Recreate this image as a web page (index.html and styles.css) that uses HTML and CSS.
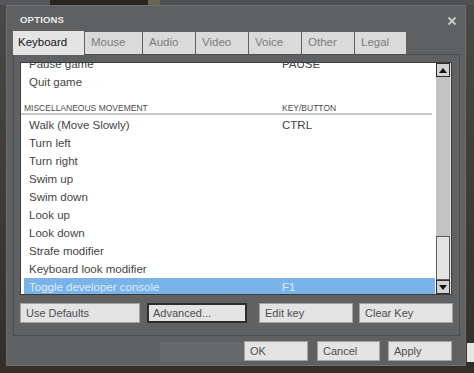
FILE: index.html
```html
<!DOCTYPE html>
<html lang="en">
  <head>
    <meta charset="utf-8">
    <title>Options</title>
    <link rel="stylesheet" href="styles.css">
  </head>
  <body>

  <div class="dialog">
    <div class="titlebar">
      <span class="title">OPTIONS</span>
      <svg class="close" width="10" height="10" viewBox="0 0 10 10">
        <path d="M1.5 1.5 L8.5 8.5 M8.5 1.5 L1.5 8.5" stroke="#c9cacb" stroke-width="1.8" fill="none"/>
      </svg>
    </div>

    <div class="tabs">
      <span class="tab active tab-keyboard">Keyboard</span>
      <span class="tab tab-mouse">Mouse</span>
      <span class="tab">Audio</span>
      <span class="tab">Video</span>
      <span class="tab">Voice</span>
      <span class="tab">Other</span>
      <span class="tab tab-legal">Legal</span>
    </div>

    <div class="panel">
      <div class="listbox">
        <div class="list">
          <div class="row first"><span>Pause game</span><span>PAUSE</span></div>
          <div class="row"><span>Quit game</span><span></span></div>
          <div class="group"><span>MISCELLANEOUS MOVEMENT</span><span>KEY/BUTTON</span></div>
          <div class="row"><span>Walk (Move Slowly)</span><span>CTRL</span></div>
          <div class="row"><span>Turn left</span><span></span></div>
          <div class="row"><span>Turn right</span><span></span></div>
          <div class="row"><span>Swim up</span><span></span></div>
          <div class="row"><span>Swim down</span><span></span></div>
          <div class="row"><span>Look up</span><span></span></div>
          <div class="row"><span>Look down</span><span></span></div>
          <div class="row"><span>Strafe modifier</span><span></span></div>
          <div class="row"><span>Keyboard look modifier</span><span></span></div>
          <div class="row selected"><span>Toggle developer console</span><span>F1</span></div>
        </div>
        <div class="scrollbar">
          <div class="arrow">
            <svg width="8" height="5" viewBox="0 0 8 5"><path d="M0 5 L4 0 L8 5 Z" fill="#111"/></svg>
          </div>
          <div class="track"></div>
          <div class="thumb"></div>
          <div class="arrow">
            <svg width="8" height="5" viewBox="0 0 8 5"><path d="M0 0 L4 5 L8 0 Z" fill="#111"/></svg>
          </div>
        </div>
      </div>

      <div class="actions">
        <span class="btn btn-defaults">Use Defaults</span>
        <span class="btn btn-advanced">Advanced...</span>
        <span class="btn btn-edit">Edit key</span>
        <span class="btn btn-clear">Clear Key</span>
      </div>
    </div>

    <div class="footer">
      <div class="patch"></div>
      <span class="btn btn-ok">OK</span>
      <span class="btn btn-cancel">Cancel</span>
      <span class="btn btn-apply">Apply</span>
    </div>
  </div>

  </body>
</html>
```

FILE: styles.css
```css
html {
  height: 100%;
}
body {
  margin: 0;
  padding: 0;
  width: 474px;
  height: 373px;
  overflow: hidden;
  background:
    linear-gradient(to right, #55575a 0 50px, #2b2521 50px 148px, #6a6452 148px 160px, #4e5052 160px) top left / 100% 5px no-repeat,
    linear-gradient(#e6e6e6, #e6e6e6) 467px 343px / 7px 19px no-repeat,
    linear-gradient(to bottom, #4b4a48, #332e2a);
  font-family: "Liberation Sans", Arial, sans-serif;
  color: #3c3c3c;
}

.dialog {
  margin: 5px 0 0 6px;
  width: 460px;
  height: 361px;
  box-sizing: border-box;
  background-color: #5e6062;
  border: 1px solid #6d6f71;
}

/* title */
.titlebar {
  height: 25px;
  display: flex;
  align-items: center;
  padding: 0 0 0 13px;
}
.title {
  font-weight: bold;
  font-size: 9.5px;
  letter-spacing: 0.2px;
  color: #ececec;
  margin-top: 1px;
}
.close {
  margin-left: auto;
  margin-right: 8px;
  margin-top: 4px;
}

/* tabs */
.tabs {
  display: flex;
  align-items: flex-end;
  height: 23px;
  margin-left: 6px;
  position: relative;
  z-index: 1;
}
.tab {
  box-sizing: border-box;
  height: 22px;
  width: 52px;
  margin-right: 1px;
  padding-left: 6px;
  line-height: 21px;
  font-size: 11.5px;
  color: #7c7c7c;
  background-color: #dadada;
}
.tab.active {
  height: 24px;
  margin-bottom: -1px;
  padding-left: 5px;
  line-height: 22px;
  color: #161616;
  background-color: #e4e4e4;
}
.tab-keyboard {
  width: 71px;
}
.tab-mouse {
  width: 57px;
}
.tab-legal {
  width: 51px;
}

/* panel */
.panel {
  margin-left: 6px;
  width: 447px;
  height: 282px;
  box-sizing: border-box;
  border: 1px solid #4b4d4f;
  background-color: #5f6163;
  padding: 7px 0 0 6px;
}

.listbox {
  display: flex;
  width: 432px;
  height: 233px;
  box-sizing: border-box;
  border: 1px solid #3a3c3e;
  background-color: #ffffff;
}

.list {
  flex: 1;
  overflow: hidden;
  font-size: 11.5px;
}

.row {
  display: grid;
  grid-template-columns: 253px 1fr;
  height: 18px;
  line-height: 18px;
  margin: 0 1px 0 3px;
  padding-left: 5px;
  color: #444444;
  white-space: nowrap;
}
.row.first {
  margin-top: -8px;
}
.row.selected {
  background-color: #79b3ea;
  color: #dcedff;
}

.group {
  display: grid;
  grid-template-columns: 258px 1fr;
  margin-right: 4px;
  padding: 12px 0 0 3px;
  line-height: 10px;
  font-size: 8.5px;
  color: #4a4a4a;
  border-bottom: 2px solid #c8c8c8;
  margin-bottom: 1px;
}

/* scrollbar */
.scrollbar {
  width: 14px;
  display: flex;
  flex-direction: column;
  background-color: #c2c2c2;
  border-right: 1px solid #e2e2e2;
}
.arrow {
  height: 14px;
  box-sizing: border-box;
  border: 1px solid #2c2c2c;
  background-color: #d2d2d2;
  display: flex;
  align-items: center;
  justify-content: center;
}
.track {
  flex: 1;
}
.thumb {
  height: 44px;
  box-sizing: border-box;
  border: 1px solid #5a5a5a;
  background-color: #e3e3e3;
}

/* buttons */
.btn {
  display: block;
  box-sizing: border-box;
  height: 20px;
  line-height: 18px;
  padding-left: 5px;
  font-size: 11px;
  color: #4e4e4e;
  background-color: #e3e3e3;
  border: 1px solid #a2a2a2;
}

.actions {
  display: flex;
  margin-top: 8px;
}
.btn-defaults {
  width: 120px;
}
.btn-advanced {
  width: 100px;
  margin-left: 7px;
  border: 2px solid #2e2e2e;
  line-height: 16px;
  padding-left: 4px;
}
.btn-edit {
  width: 94px;
  margin-left: 12px;
}
.btn-clear {
  width: 94px;
  margin-left: 6px;
}

.footer {
  display: flex;
  align-items: flex-start;
  padding: 5px 0 0 153px;
}
.patch {
  width: 84px;
  height: 20px;
  margin-top: 1px;
  background-color: #656769;
}
.btn-ok {
  width: 64px;
}
.btn-cancel {
  width: 63px;
  margin-left: 9px;
}
.btn-apply {
  width: 64px;
  margin-left: 8px;
}
```
